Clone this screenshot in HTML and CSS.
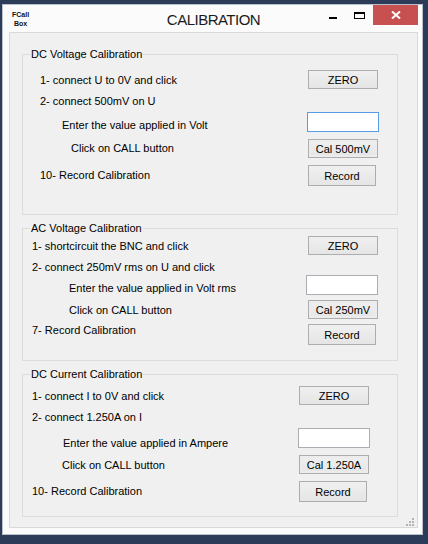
FILE: index.html
```html
<!DOCTYPE html>
<html lang="en">
<head>
    <meta charset="UTF-8">
    <meta name="viewport" content="width=device-width, initial-scale=1.0">
    <title>CALIBRATION</title>
    <link rel="stylesheet" href="styles.css">
</head>
<body>
    <div class="window">
        <div class="titlebar">
            <div class="app-icon">FCall<br>Box</div>
            <div class="title">CALIBRATION</div>
            <div class="caption-buttons">
                <span class="cap-btn min"><i></i></span>
                <span class="cap-btn max"><i></i></span>
                <span class="cap-btn close">
                    <svg width="10" height="8" viewBox="0 0 10 8">
                        <path d="M1 0.5 L9 7.5 M9 0.5 L1 7.5" stroke="#fff" stroke-width="2" fill="none"/>
                    </svg>
                </span>
            </div>
        </div>

        <div class="client">
            <fieldset class="group dcv">
                <legend>DC Voltage Calibration</legend>
                <div class="group-body">
                    <div class="steps">
                        <p class="step">1- connect U to 0V and click</p>
                        <p class="step">2- connect 500mV on U</p>
                        <p class="step">Enter the value applied in Volt</p>
                        <p class="step">Click on CALL button</p>
                        <p class="step">10- Record Calibration</p>
                    </div>
                    <div class="controls">
                        <button class="btn btn-zero">ZERO</button>
                        <input type="text" class="value focused">
                        <button class="btn btn-cal">Cal 500mV</button>
                        <button class="btn btn-record">Record</button>
                    </div>
                </div>
            </fieldset>

            <fieldset class="group acv">
                <legend>AC Voltage Calibration</legend>
                <div class="group-body">
                    <div class="steps">
                        <p class="step">1- shortcircuit the BNC and click</p>
                        <p class="step">2- connect 250mV rms on U and click</p>
                        <p class="step">Enter the value applied in Volt rms</p>
                        <p class="step">Click on CALL button</p>
                        <p class="step">7- Record Calibration</p>
                    </div>
                    <div class="controls">
                        <button class="btn btn-zero">ZERO</button>
                        <input type="text" class="value">
                        <button class="btn btn-cal">Cal 250mV</button>
                        <button class="btn btn-record">Record</button>
                    </div>
                </div>
            </fieldset>

            <fieldset class="group dci">
                <legend>DC Current Calibration</legend>
                <div class="group-body">
                    <div class="steps">
                        <p class="step">1- connect I to 0V and click</p>
                        <p class="step">2- connect 1.250A on I</p>
                        <p class="step">Enter the value applied in Ampere</p>
                        <p class="step">Click on CALL button</p>
                        <p class="step">10- Record Calibration</p>
                    </div>
                    <div class="controls">
                        <button class="btn btn-zero">ZERO</button>
                        <input type="text" class="value">
                        <button class="btn btn-cal">Cal 1.250A</button>
                        <button class="btn btn-record">Record</button>
                    </div>
                </div>
            </fieldset>

            <svg class="grip" width="8" height="8" viewBox="0 0 8 8">
                <rect x="6" y="0" width="2" height="2"/>
                <rect x="3" y="3" width="2" height="2"/>
                <rect x="6" y="3" width="2" height="2"/>
                <rect x="0" y="6" width="2" height="2"/>
                <rect x="3" y="6" width="2" height="2"/>
                <rect x="6" y="6" width="2" height="2"/>
            </svg>
        </div>
    </div>
</body>
</html>
```

FILE: styles.css
```css
body {
    margin: 0;
    padding: 4px 0 0 2px;
    background: #2c3b57;
    font-family: "Liberation Sans", Arial, sans-serif;
    font-size: 11px;
    color: #000;
    height: 100vh;
    box-sizing: border-box;
    overflow: hidden;
}

/* window frame */
.window {
    width: 421px;
    box-sizing: border-box;
    border: 1px solid #b8c0cc;
    background: #fbfbfb;
    padding: 0 4px 6px 6px;
}
.titlebar {
    display: grid;
    grid-template-columns: 1fr auto 1fr;
    align-items: start;
    height: 27px;
}
.app-icon {
    width: 17px;
    margin: 5px 0 0 3px;
    font-size: 7px;
    line-height: 9px;
    font-weight: bold;
    text-align: center;
    color: #111;
}
.title {
    padding-top: 5px;
    font-size: 15px;
    line-height: 20px;
    letter-spacing: -0.5px;
    color: #1a1a1a;
}
.caption-buttons {
    justify-self: end;
    display: flex;
}
.cap-btn {
    height: 20px;
    display: flex;
    align-items: center;
    justify-content: center;
}
.min { width: 26px; }
.min i {
    width: 8px;
    height: 2px;
    margin-top: 5px;
    background: #000;
}
.max { width: 27px; }
.max i {
    width: 11px;
    height: 7px;
    box-sizing: border-box;
    border: 1px solid #000;
    border-top-width: 2px;
}
.close {
    width: 45px;
    background: #c75050;
}

/* client area */
.client {
    position: relative;
    border: 1px solid #d9d9d9;
    background: #f0f0f0;
    padding-bottom: 10px;
}
.grip {
    position: absolute;
    right: 3px;
    bottom: 1px;
    fill: #b4b4b4;
}

/* group boxes */
.group {
    width: 376px;
    min-width: 0;
    box-sizing: border-box;
    margin: 6px 0 0 12px;
    border: 1px solid #dcdcdc;
    padding: 0 18px 28px 7px;
}
.group.dcv { margin-top: 14px; }
.group.acv { padding-right: 19px; padding-bottom: 15px; }
.group.dci { padding-right: 27px; padding-bottom: 14px; }
legend {
    padding: 0 1px;
    line-height: 14px;
}
.group-body {
    display: flex;
    justify-content: space-between;
    align-items: flex-start;
}
.steps {
    display: flex;
    flex-direction: column;
    align-items: flex-start;
    margin-left: 2px;
}
.step {
    margin: 0;
    line-height: 13px;
    white-space: nowrap;
}
.controls {
    display: flex;
    flex-direction: column;
    align-items: flex-start;
    width: 72px;
}

/* DC voltage */
.dcv .steps { margin-left: 10px; }
.dcv .step:nth-child(1) { margin-top: 13px; }
.dcv .step:nth-child(2) { margin-top: 8px; }
.dcv .step:nth-child(3) { margin-top: 11px; margin-left: 22px; }
.dcv .step:nth-child(4) { margin-top: 10px; margin-left: 31px; }
.dcv .step:nth-child(5) { margin-top: 14px; }
.dcv .btn-zero { margin-top: 9px; }
.dcv .value { margin-top: 23px; }
.dcv .btn-cal { margin-top: 7px; }
.dcv .btn-record { margin-top: 7px; }

/* AC voltage */
.acv .step:nth-child(1) { margin-top: 5px; }
.acv .step:nth-child(2) { margin-top: 8px; }
.acv .step:nth-child(3) { margin-top: 8px; margin-left: 37px; }
.acv .step:nth-child(4) { margin-top: 9px; margin-left: 37px; }
.acv .step:nth-child(5) { margin-top: 7px; }
.acv .btn-zero { margin-top: 1px; }
.acv .value { margin-top: 20px; }
.acv .btn-cal { margin-top: 5px; }
.acv .btn-record { margin-top: 5px; }
.acv .btn { margin-left: 2px; }

/* DC current */
.dci .step:nth-child(1) { margin-top: 9px; }
.dci .step:nth-child(2) { margin-top: 8px; }
.dci .step:nth-child(3) { margin-top: 13px; margin-left: 31px; }
.dci .step:nth-child(4) { margin-top: 9px; margin-left: 30px; }
.dci .step:nth-child(5) { margin-top: 13px; }
.dci .btn-zero { margin-top: 5px; }
.dci .value { margin-top: 23px; }
.dci .btn-cal { margin-top: 7px; }
.dci .btn-record { margin-top: 7px; }

/* controls */
.btn {
    font: inherit;
    color: #000;
    width: 70px;
    height: 19px;
    margin-left: 1px;
    padding: 0;
    border: 1px solid #adadad;
    background: linear-gradient(#f0f0f0, #e5e5e5);
}
.btn-cal { box-shadow: inset 0 0 0 2px #ececec; }
.btn-record {
    width: 68px;
    height: 21px;
}
.value {
    font: inherit;
    width: 72px;
    height: 20px;
    box-sizing: border-box;
    margin: 0;
    padding: 0 3px;
    border: 1px solid #abadb3;
    background: #fff;
    outline: none;
}
.value.focused { border-color: #569de5; }
```
